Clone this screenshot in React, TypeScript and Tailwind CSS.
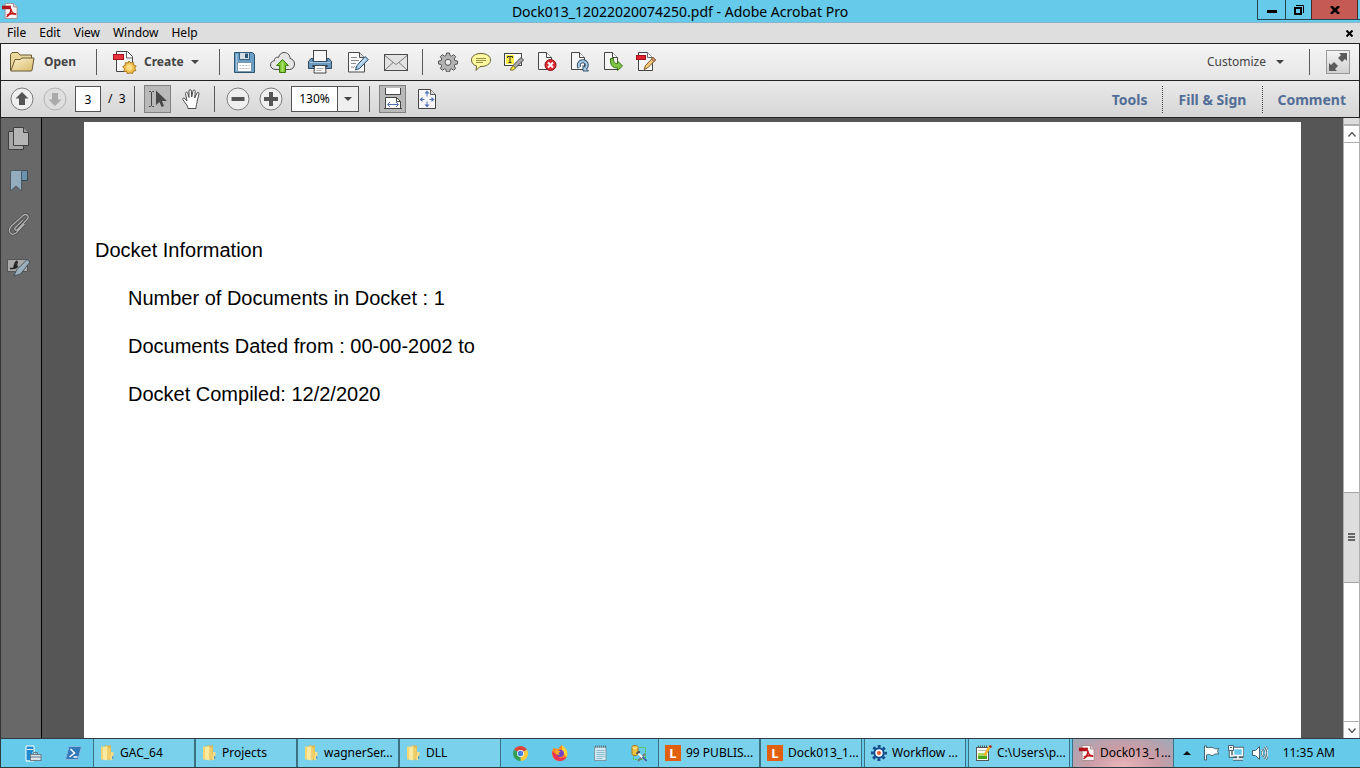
import { useState } from 'react'
import type { ReactNode } from 'react'

const menus = ['File', 'Edit', 'View', 'Window', 'Help']

function PdfIcon({ className = 'w-4 h-4' }: { className?: string }) {
  return (
    <svg viewBox="0 0 18 18" className={className}>
      <path d="M3.500.5H13l4 4v13H3.500z" fill="#fbf6f5" stroke="#a08a88" />
      <path d="M13 .5v4h4" fill="#d8cccb" stroke="#a08a88" />
      <path d="M0 3h10v4H0z" fill="#b2151b" />
      <path d="M9.500 6c1 4 3 6.500 6.500 6.500M10 7c.5 3-2 7-5 8.500M5.500 14c3-2.500 6-2.500 10-1.500" fill="none" stroke="#c4171e" strokeWidth="1.800" />
    </svg>
  )
}

function OpenIcon() {
  return (
    <svg viewBox="0 0 25 20" className="w-[25px] h-5">
      <defs>
        <linearGradient id="fold" x1="0" y1="0" x2="1" y2="1">
          <stop offset="0" stopColor="#fdf3cf" />
          <stop offset="1" stopColor="#d8b968" />
        </linearGradient>
      </defs>
      <path d="M.5 18V2.500L2 .5h6l2 2.500h11.500V7" fill="#e9d79c" stroke="#6b5a35" />
      <path d="M.8 19 5 7.500h5l2-1.500h12l-2 12.500-1 .5z" fill="url(#fold)" stroke="#6b5a35" />
    </svg>
  )
}

function CreateIcon() {
  return (
    <svg viewBox="0 0 24 23" className="w-6 h-[23px]">
      <path d="M3.500.5h11l5 5v15H3.500z" fill="#f8f8f8" stroke="#444" />
      <path d="M13.500 1v6h6" fill="#fff" stroke="#666" />
      <rect x=".5" y="3.500" width="10" height="5" fill="#e8323f" stroke="#a3141d" />
      <path d="m16 10 1.700 2 2.600-.7.300 2.700 2.600 1-1.500 2.200 1.200 2.400-2.700.6-.7 2.500-2.500-1-2.300 1.300-1.100-2.400-2.700-.3.600-2.600-1.800-2 2.400-1.400.3-2.700 2.600.4z" fill="#f0bf4c" stroke="#a87924" />
      <circle cx="16.300" cy="16.500" r="3" fill="#fbdc86" />
    </svg>
  )
}

function SaveIcon() {
  return (
    <svg viewBox="0 0 21 21" className="w-[21px] h-[21px]">
      <path d="M.5.5h18l2 2v18H.5z" fill="#6b9ec4" stroke="#2c5572" />
      <path d="M2 2h1.500v17H2z" fill="#9ac2de" />
      <rect x="5.500" y=".5" width="10" height="7" fill="#d4dde4" stroke="#3a6280" />
      <rect x="11" y="1.500" width="3" height="4.500" fill="#2c5572" />
      <rect x="3.500" y="10.500" width="14" height="9" fill="#fff" stroke="#7c98ad" />
      <path d="M5.500 13.500h10M5.500 16.500h10" stroke="#b5bcc2" strokeDasharray="2 1" />
    </svg>
  )
}

function CloudIcon() {
  return (
    <svg viewBox="0 0 25 21" className="w-[25px] h-[21px]">
      <path d="M6 17.500C2.500 17.500.5 15.500.5 13c0-2.500 1.500-4 4-4.300C4 6 7 4.500 8.500 5.500 9.500 2 11.500.5 14 .5c3.500 0 6 2.500 6 6 2.500.5 4.500 2.500 4.500 5.500s-2 5.500-5 5.500z" fill="#e6e6e6" stroke="#4c4c4c" />
      <path d="m12.500 7.500 6 6h-3v7h-6v-7h-3z" fill="#7cc62f" stroke="#3d7c10" />
      <path d="M12.500 9.500v10" stroke="#a9e36b" strokeWidth="2" />
    </svg>
  )
}

function PrintIcon() {
  return (
    <svg viewBox="0 0 24 24" className="w-6 h-6">
      <rect x="5.500" y=".5" width="13" height="11" fill="#f6f6f6" stroke="#444" />
      <path d="M3 8.500h2v3h14v-3h2l2.500 3v7h-23v-7z" fill="#6b99bd" stroke="#2e4c63" />
      <path d="M2 12.500h20" stroke="#a4c6df" />
      <path d="M4.500 15h15v2h-15z" fill="#20394d" />
      <path d="M6.500 15.500h11l.5 7.500H6z" fill="#fff" stroke="#444" />
      <path d="M8.500 18.500h7M8.500 20.500h5" stroke="#aaa" />
    </svg>
  )
}

function EditDocIcon() {
  return (
    <svg viewBox="0 0 22 21" className="w-[22px] h-[21px]">
      <path d="M1.500.5h11l5 5v14.500h-16z" fill="#fafafa" stroke="#4a4a4a" />
      <path d="M12.500.5v5h5" fill="#ddd" stroke="#4a4a4a" />
      <path d="M4 5.500h6M4 8.500h8M4 11.500h5M4 15.500c1-2 2 1 3-.5s1 1 2 .5" fill="none" stroke="#888" />
      <path d="M18 4.500 21.300 7.500l-8.800 9-4 1.500 1.500-4.500z" fill="#a9cbe4" stroke="#28516f" />
      <path d="m12 13.500 6.500-6.500" stroke="#e3f0f9" />
    </svg>
  )
}

function MailIcon() {
  return (
    <svg viewBox="0 0 24 17" className="w-6 h-[17px]">
      <rect x=".5" y=".5" width="23" height="16" fill="#e2e2e2" stroke="#4b4b4b" />
      <path d="m1 1.500 9.500 8c1 1 2 1 3 0l9.500-8M1 16l8-7.500M23 16l-8-7.500" fill="none" stroke="#777" />
    </svg>
  )
}

function GearIcon() {
  return (
    <svg viewBox="0 0 20 20" className="w-5 h-5">
      <path
        d="M8.500 1h3l.5 2.500 1.500.7 2.200-1.500 2 2-1.500 2.300.6 1.500 2.700.5v3l-2.700.5-.6 1.500 1.500 2.300-2 2-2.200-1.500-1.500.7-.5 2.500h-3L8 17.500l-1.500-.7-2.200 1.500-2-2L3.800 14l-.6-1.500L.5 12V9l2.700-.5L3.800 7 2.300 4.700l2-2 2.200 1.500L8 3.500z"
        fill="#b4b4b4"
        stroke="#555"
      />
      <circle cx="10" cy="10.300" r="3" fill="#ececec" stroke="#555" />
    </svg>
  )
}

function CommentIcon() {
  return (
    <svg viewBox="0 0 20 18" className="w-5 h-[18px]">
      <path d="M10 .5c5.500 0 9.500 2.500 9.500 6.500s-4 6.500-9.500 6.500H9L5 17.500l.5-4.500C2.500 12 .5 10 .5 7 .5 3 4.500.5 10 .5z" fill="#fff9a0" stroke="#66612f" />
      <path d="M5 5.500h10M5 7.500h10M5 9.500h7" stroke="#918a42" />
    </svg>
  )
}

function HighlightIcon() {
  return (
    <svg viewBox="0 0 20 18" className="w-5 h-[18px]">
      <rect x=".5" y=".5" width="17" height="12" fill="#fff" stroke="#444" />
      <rect x="2" y="2" width="8" height="9" fill="#ffec42" />
      <path d="M3.500 5V3.500h5V5M6 3.500v6M4.500 9.500h3" fill="none" stroke="#333" />
      <path d="m17 4.500 2.500 2.500-8 8H9v-2.500z" fill="#aaa" stroke="#444" />
      <path d="m9 12.500 2.500 2.500-2 2H6z" fill="#ffe42b" stroke="#777030" />
    </svg>
  )
}

// page sheet shared by the delete / rotate / extract buttons
function Sheet({ children }: { children: ReactNode }) {
  return (
    <svg viewBox="0 0 20 20" className="w-5 h-5">
      <path d="M1.500.5h8l5 5v12h-13z" fill="#f6f6f6" stroke="#464646" />
      <path d="M9.500.5v5h5" fill="#fff" stroke="#464646" />
      {children}
    </svg>
  )
}

function DeletePageIcon() {
  return (
    <Sheet>
      <circle cx="13.500" cy="13" r="5.500" fill="#dc2a30" stroke="#8b1116" />
      <path d="m11 10.500 5 5m0-5-5 5" stroke="#fff" strokeWidth="2" />
    </Sheet>
  )
}

function RotatePageIcon() {
  return (
    <Sheet>
      <path d="M9.500 15.500a4 4 0 1 1 5.500 1" fill="none" stroke="#35536d" strokeWidth="4" />
      <path d="M13 13.500v5.500h5.500z" fill="#a8cae5" stroke="#35536d" />
      <path d="M9.500 15.500a4 4 0 1 1 5.500 1" fill="none" stroke="#a8cae5" strokeWidth="2" />
    </Sheet>
  )
}

function ExtractPageIcon() {
  return (
    <Sheet>
      <path d="M7.500 6.500h3c0 4 1 5 4 5V9l5 5-5 4.500V16c-5 0-7.500-3-7-9.500z" fill="#7fc742" stroke="#356f14" />
    </Sheet>
  )
}

function EditPdfIcon() {
  return (
    <svg viewBox="0 0 20 20" className="w-5 h-5">
      <path d="M2.500.5h9l5 5v13h-14z" fill="#f8f8f8" stroke="#444" />
      <path d="M11.500.5v5h5" fill="#fff" stroke="#666" />
      <rect x=".5" y="3.500" width="9" height="4" fill="#e4202c" stroke="#9c131b" />
      <path d="m17 5.500 2.500 2.500-8 8-3.500 1.500 1.500-4z" fill="#f3c878" stroke="#7c5724" />
      <path d="m17 5.500 2.500 2.500-1.500 1.500L15.500 7z" fill="#e69a8c" stroke="#7c5724" />
    </svg>
  )
}

function CircleIcon({ faded, children }: { faded?: boolean; children: ReactNode }) {
  return (
    <svg viewBox="0 0 24 24" className="w-6 h-6">
      <circle cx="12" cy="12" r="11" fill={faded ? '#dedede' : '#efefef'} stroke={faded ? '#b4b4b4' : '#7b7b7b'} />
      <g fill={faded ? '#aaa' : '#555'}>{children}</g>
    </svg>
  )
}

function SelectIcon() {
  return (
    <svg viewBox="0 0 20 18" className="w-5 h-[18px]">
      <path d="M1 1.500h1.500l1 1 1-1H6M3.500 2v14M1 16.500h1.500l1-1 1 1H6" fill="none" stroke="#444" />
      <path d="M8 .5v14.500l3.500-3 2 5 2.500-1-2-5H19z" fill="#484848" />
    </svg>
  )
}

function HandIcon() {
  return (
    <svg viewBox="0 0 20 20" className="w-5 h-5">
      <path d="M6 19.500c0-2-1-3-2-4.500L.8 10.500c-.6-1.500 1-2 2-1L5 12 3.500 4.500c0-1.700 1.800-1.900 2.200-.3L7 8.500 7 2C7 .3 9.200.2 9.400 2l.3 6L11 2c.4-1.600 2.400-1.300 2.200.4L12.700 9l2.300-5c.8-1.400 2.500-.6 2 1l-1.800 7c-.4 3-1.200 4-1.200 7.500z" fill="#fff" stroke="#4d4d4d" />
    </svg>
  )
}

function FitWidthIcon() {
  return (
    <svg viewBox="0 0 18 22" className="w-[18px] h-[22px]">
      <path d="M1.500 0v6.500h15V0" fill="#fff" stroke="#444" />
      <path d="M1.500 20V9.500h11l4 4V20" fill="#fff" stroke="#444" />
      <path d="M12.500 9.500v4h4" fill="none" stroke="#444" />
      <path d="M0 20.500h18" stroke="#444" />
      <path d="M4 16.500h10M6 14 3.500 16.500 6 19M12 14l2.500 2.500L12 19" fill="none" stroke="#5270b4" />
    </svg>
  )
}

function FitPageIcon() {
  return (
    <svg viewBox="0 0 18 20" className="w-[18px] h-5">
      <path d="M.5.5h12l5 5v14H.5z" fill="#f6f6f6" stroke="#444" />
      <path d="M12.500.5v5h5" fill="#ddd" stroke="#555" />
      <path d="M9 3v4.500M9 12.500V17M2 10.500h4.500M11.500 10.500H16" stroke="#5270b4" />
      <path d="m9 1.500 2.500 3h-5zM9 18.500l2.500-3h-5zM1.500 10.500l3-2.500v5zM16.500 10.500l-3-2.500v5z" fill="#5270b4" />
    </svg>
  )
}

function FolderIcon() {
  return (
    <svg viewBox="0 0 15 16" className="w-[15px] h-4">
      <path d="M1 1.500h4.500v13H1z" fill="#f3d673" />
      <path d="M5 .5h6v14H5z" fill="#dcb74c" />
      <path d="M3 2.500 7.500 1v14.500L3 14.500z" fill="#fbe9a0" />
      <path d="m8 3 2.500-1v11L8 15.500z" fill="#f0cd66" />
      <path d="M11 7h2.500v7L10 15.500z" fill="#f7de8c" />
      <path d="M12 11h1.500v3H12z" fill="#4fa3d1" />
    </svg>
  )
}

function LIcon() {
  return (
    <span className="w-4 h-4 bg-[#e0600f] text-white flex items-center justify-center text-[13px] leading-4 font-bold">L</span>
  )
}

function WorkflowIcon() {
  return (
    <svg viewBox="0 0 16 16" className="w-4 h-4">
      <circle cx="8" cy="8" r="6.700" fill="none" stroke="#134a8b" strokeWidth="2.600" strokeDasharray="2.900 2.362" strokeDashoffset="1.450" />
      <circle cx="8" cy="8" r="4.700" fill="#fff" stroke="#134a8b" strokeWidth="2" />
      <circle cx="8" cy="8" r="2" fill="#e8582a" />
    </svg>
  )
}

function NotepadPlusIcon() {
  return (
    <svg viewBox="0 0 17 17" className="w-[17px] h-[17px]">
      <rect x="1.500" y="2.500" width="12" height="13" fill="#fdfdf6" stroke="#555" />
      <path d="M3 5.500h8" stroke="#bbb" />
      <path d="M3 8h9v3H3z" fill="#a8d860" />
      <path d="M3 11h9v3H3z" fill="#4fa41d" />
      <path d="M3 1.500h10" stroke="#555" strokeWidth="2" strokeDasharray="1 1" />
      <path d="m15 1-5.500 9.500" stroke="#f0b52f" strokeWidth="2.500" />
      <path d="m16 .5-1 2" stroke="#a0281f" strokeWidth="2.500" />
    </svg>
  )
}

function ServerManagerIcon() {
  return (
    <svg viewBox="0 0 17 17" className="w-[17px] h-[17px]">
      <path d="M1 1h8v6H7v2H5v6H1z" fill="#2189d1" />
      <path d="M1 1h8v15H1z" fill="none" stroke="#fff" />
      <path d="M2 4.500h6" stroke="#fff" />
      <path d="M8.500 9V7.500h4V9" fill="none" stroke="#6d7c88" />
      <rect x="5.500" y="9.500" width="10.500" height="6" fill="#dce4ea" stroke="#6d7c88" />
      <path d="M5 12h11" stroke="#6d7c88" />
    </svg>
  )
}

function PowerShellIcon() {
  return (
    <svg viewBox="0 0 17 14" className="w-[17px] h-[14px]">
      <path d="M4 .5h12.500l-3.500 13H.5z" fill="#3179b9" stroke="#86b9de" />
      <path d="m5.500 3 4 4-5 4M8.500 11h4" fill="none" stroke="#fff" strokeWidth="1.500" />
    </svg>
  )
}

function ChromeIcon() {
  return (
    <svg viewBox="0 0 16 16" className="w-[15px] h-[15px]">
      <path d="M8 8 1.100 4A8 8 0 0 1 14.900 4z" fill="#dc4436" />
      <path d="M8 8 14.900 4A8 8 0 0 1 8 16z" fill="#f8ca3c" />
      <path d="M8 8v8A8 8 0 0 1 1.100 4z" fill="#379e56" />
      <circle cx="8" cy="8" r="3.700" fill="#fff" />
      <circle cx="8" cy="8" r="2.900" fill="#447fdf" />
    </svg>
  )
}

function FirefoxIcon() {
  return (
    <svg viewBox="0 0 16 16" className="w-4 h-4">
      <path d="M10 0c1 2 3 2 4.500 5 3 6-1.500 11-6.500 11S0 12.500 0 8c0-2 .8-4 2-5.500L3 4c2-1 3 0 4 0 0-2 1.500-3 3-4z" fill="#ff8a1f" />
      <path d="M10 0c1 2 3 2 4.500 5 1 2.500 1 5 0 7L10 6z" fill="#ffd43a" />
      <path d="M.4 6C0 12 3 16 8 16c3 0 5-1.500 6.500-4L8 13z" fill="#ef3355" />
      <circle cx="8.300" cy="8.300" r="3.600" fill="#7141c8" />
      <path d="M3 6c2-1 3.500-1 5.500.5L6.500 8 8 10c-3 0-4.500-1-5-4z" fill="#ffad22" />
    </svg>
  )
}

function NotepadIcon() {
  return (
    <svg viewBox="0 0 14 16" className="w-[14px] h-4">
      <rect x="1.500" y="2" width="11.500" height="13.500" fill="#d4eaf2" stroke="#7a98a5" />
      <path d="M2 1.500h11" stroke="#5c7480" strokeWidth="2" strokeDasharray="1 1" />
      <path d="M3.500 5.500h8M3.500 7.500h8M3.500 9.500h8M3.500 11.500h8M3.500 13.500h6" stroke="#8bbccd" />
    </svg>
  )
}

function DbToolIcon() {
  return (
    <svg viewBox="0 0 17 17" className="w-[17px] h-[17px]">
      <rect x="2.500" y="2.500" width="12" height="12" fill="none" stroke="#59c238" strokeDasharray="2 1" />
      <path d="M1 2c0-2 6-2 6 0v7c0 2-6 2-6 0z" fill="#efc241" stroke="#a57b1c" />
      <path d="M1.500 2.500c1 1 4 1 5 0" fill="none" stroke="#fff2b8" />
      <path d="m7 16 7-7" stroke="#777" strokeWidth="2" />
      <path d="m7 8 8 8" stroke="#f3f3f3" strokeWidth="2" />
      <path d="m11.500 12 4 4" stroke="#3865a5" strokeWidth="2" />
      <path d="M6 9c0-2 1.500-2 3-2" fill="none" stroke="#555" strokeWidth="2" />
    </svg>
  )
}

function Caret() {
  return (
    <svg viewBox="0 0 8 4" className="w-2 h-1">
      <path d="M0 0h8L4 4z" fill="#444" />
    </svg>
  )
}

function Sep() {
  return <span className="w-px h-[26px] bg-[#5a5a5a] shrink-0" />
}

function ToolButton({ label, className, children }: { label: string; className: string; children: ReactNode }) {
  return (
    <button type="button" aria-label={label} className={`h-7 flex items-center justify-center shrink-0 ${className}`}>
      {children}
    </button>
  )
}

const fileTools = [
  { label: 'Save', icon: <SaveIcon /> },
  { label: 'Upload', icon: <CloudIcon /> },
  { label: 'Print', icon: <PrintIcon /> },
  { label: 'Edit text', icon: <EditDocIcon /> },
  { label: 'Email', icon: <MailIcon /> },
]

const quickTools = [
  { label: 'Preferences', icon: <GearIcon /> },
  { label: 'Add note', icon: <CommentIcon /> },
  { label: 'Highlight', icon: <HighlightIcon /> },
  { label: 'Delete page', icon: <DeletePageIcon /> },
  { label: 'Rotate page', icon: <RotatePageIcon /> },
  { label: 'Extract page', icon: <ExtractPageIcon /> },
  { label: 'Edit PDF', icon: <EditPdfIcon /> },
]

const folders = ['GAC_64', 'Projects', 'wagnerSer...', 'DLL']

function TitleBar() {
  return (
    <header className="h-[23px] shrink-0 flex items-start bg-[#66caea] border-b border-[#8ab4c6]">
      <div className="w-[103px] pl-[2px] pt-[3px]">
        <PdfIcon />
      </div>
      <h1 className="flex-1 text-center text-[14px] leading-[23px] whitespace-nowrap text-black">
        Dock013_12022020074250.pdf - Adobe Acrobat Pro
      </h1>
      <div className="flex h-5 w-[103px] border-l border-b border-[#26434f]">
        <button type="button" aria-label="Minimize" className="w-[27px] flex items-center justify-center">
          <span className="w-[10px] h-[3px] mt-1 bg-black" />
        </button>
        <button type="button" aria-label="Restore" className="w-[26px] border-l border-[#26434f] flex items-center justify-center">
          <svg viewBox="0 0 10 10" className="w-[10px] h-[10px]">
            <path d="M1 3h6v6H1z" fill="none" stroke="#000" strokeWidth="2" />
            <path d="M2 .5h7.500V8" fill="none" stroke="#000" />
          </svg>
        </button>
        <button type="button" aria-label="Close" className="flex-1 mr-[2px] bg-[#c45a53] border-x border-[#4a2724] flex items-center justify-center">
          <svg viewBox="0 0 10 8" className="w-[10px] h-2">
            <path d="m1 0 8 8M9 0 1 8" stroke="#000" strokeWidth="2.500" />
          </svg>
        </button>
      </div>
    </header>
  )
}

function MenuBar() {
  return (
    <nav className="h-5 shrink-0 flex items-center gap-[13px] px-[7px] bg-[#dedede] text-[12px] leading-4">
      {menus.map((m) => (
        <button key={m} type="button">{m}</button>
      ))}
      <button type="button" aria-label="Close document" className="ml-auto">
        <svg viewBox="0 0 7 7" className="w-[7px] h-[7px]">
          <path d="m.5.5 6 6m0-6-6 6" stroke="#000" strokeWidth="2" />
        </svg>
      </button>
    </nav>
  )
}

function MainToolbar() {
  return (
    <div className="h-[37px] shrink-0 flex items-center border-t border-x border-[#222] bg-linear-to-b from-[#f5f5f5] to-[#e5e5e5] text-[#444]">
      <button type="button" className="w-[95px] pl-[9px] flex items-center gap-[9px] font-bold text-[12px]">
        <OpenIcon />
        Open
      </button>
      <Sep />
      <button type="button" className="w-[122px] pl-4 flex items-center gap-[7px] font-bold text-[12px]">
        <CreateIcon />
        Create
        <Caret />
      </button>
      <Sep />
      <div className="flex pl-[5px] w-[202px]">
        {fileTools.map((t) => (
          <ToolButton key={t.label} label={t.label} className="w-[38px]">{t.icon}</ToolButton>
        ))}
      </div>
      <Sep />
      <div className="flex pl-2">
        {quickTools.map((t) => (
          <ToolButton key={t.label} label={t.label} className="w-[33px]">{t.icon}</ToolButton>
        ))}
      </div>
      <button type="button" className="ml-auto mr-[25px] flex items-center gap-[10px] text-[12px]">
        Customize
        <Caret />
      </button>
      <Sep />
      <button type="button" aria-label="Read mode" className="ml-4 mr-[9px] w-6 h-6 border border-[#999] bg-linear-to-b from-[#f4f4f4] to-[#d0d0d0] flex items-center justify-center">
        <svg viewBox="0 0 18 18" className="w-[18px] h-[18px]">
          <path d="M18 0v8l-2-2-3 3-4-4 3-3-2-2zM0 18v-8l2 2 3-3 4 4-3 3 2 2z" fill="#5c5c5c" />
        </svg>
      </button>
    </div>
  )
}

function PageToolbar() {
  const [page, setPage] = useState('3')
  const [zoom, setZoom] = useState('130%')

  return (
    <div className="h-[37px] shrink-0 flex items-center border-t border-x border-[#222] bg-linear-to-b from-[#e9e9e9] to-[#d6d6d6] text-[12px]">
      <ToolButton label="Previous page" className="w-[33px] ml-1">
        <CircleIcon><path d="m12 5 6.500 6.500H15V18H9v-6.500H5.500z" /></CircleIcon>
      </ToolButton>
      <ToolButton label="Next page" className="w-[33px]">
        <CircleIcon faded><path d="m12 19 6.500-6.500H15V6H9v6.500H5.500z" /></CircleIcon>
      </ToolButton>
      <input
        aria-label="Page number"
        value={page}
        onChange={(e) => setPage(e.target.value)}
        className="ml-1 w-[26px] h-[26px] bg-white border border-[#555] text-center text-black"
      />
      <span className="w-[33px] pl-[7px] whitespace-pre text-black">/  3</span>
      <Sep />
      <ToolButton label="Select" className="w-[27px] ml-[9px] bg-[#b9b9b9] border border-[#808080]"><SelectIcon /></ToolButton>
      <ToolButton label="Hand" className="w-[33px] ml-1 mr-[6px]"><HandIcon /></ToolButton>
      <Sep />
      <ToolButton label="Zoom out" className="w-[33px] ml-[6px]">
        <CircleIcon><path d="M5.500 10h13v4h-13z" /></CircleIcon>
      </ToolButton>
      <ToolButton label="Zoom in" className="w-[33px]">
        <CircleIcon><path d="M10 5h4v5h5v4h-5v5h-4v-5H5v-4h5z" /></CircleIcon>
      </ToolButton>
      <div className="ml-1 mr-[10px] w-[68px] h-[26px] flex border border-[#555] bg-white">
        <input
          aria-label="Zoom"
          value={zoom}
          onChange={(e) => setZoom(e.target.value)}
          className="w-[45px] text-center text-black"
        />
        <button type="button" aria-label="Zoom levels" className="flex-1 border-l border-[#555] bg-[#efefef] flex items-center justify-center">
          <Caret />
        </button>
      </div>
      <Sep />
      <ToolButton label="Fit width" className="w-[27px] ml-[9px] bg-[#b9b9b9] border border-[#808080]"><FitWidthIcon /></ToolButton>
      <ToolButton label="Fit page" className="w-[33px] ml-1"><FitPageIcon /></ToolButton>
      <div className="ml-auto mr-[13px] flex items-center text-[14px] font-bold text-[#526d96]">
        <button type="button" className="pr-[14px]">Tools</button>
        <button type="button" className="h-[27px] px-4 border-l border-dotted border-[#444]">Fill &amp; Sign</button>
        <button type="button" className="h-[27px] pl-[14px] border-l border-dotted border-[#444]">Comment</button>
      </div>
    </div>
  )
}

function SidePanel() {
  return (
    <aside className="w-[42px] shrink-0 pt-[6px] flex flex-col gap-[15px] bg-[#686868] border-l border-l-[#333] border-r border-r-black">
      <ToolButton label="Page thumbnails" className="w-9">
        <svg viewBox="0 0 22 23" className="w-[22px] h-[23px]">
          <path d="M.5 4.500h15v18H.5z" fill="#a6a6a6" stroke="#3f3f3f" />
          <path d="M5.500.5h10l5 5v13h-15z" fill="#b5b5b5" stroke="#3f3f3f" />
          <path d="M15.500.5v5h5" fill="#999" stroke="#3f3f3f" />
        </svg>
      </ToolButton>
      <ToolButton label="Bookmarks" className="w-9">
        <svg viewBox="0 0 18 22" className="w-[18px] h-[22px]">
          <path d="M11.500.5h6v10h-6z" fill="#6b93ad" stroke="#3b4a55" />
          <path d="M.5 1.500 2 .5h11L11.500 2v19L6 16 .5 21z" fill="#93adbe" stroke="#4b5a65" />
        </svg>
      </ToolButton>
      <ToolButton label="Attachments" className="w-9">
        <svg viewBox="0 0 22 23" className="w-[22px] h-[23px]">
          <path d="m15 7-8 8c-1 1.500 1 3 2.500 1.500l9.500-10c3-3.500-1-6.500-4-4L3 13.500C-1 18 3.500 24 8 20l8.500-9" fill="none" stroke="#444" strokeWidth="2.600" />
          <path d="m15 7-8 8c-1 1.500 1 3 2.500 1.500l9.500-10c3-3.500-1-6.500-4-4L3 13.500C-1 18 3.500 24 8 20l8.500-9" fill="none" stroke="#b0b0b0" strokeWidth="1.300" />
        </svg>
      </ToolButton>
      <ToolButton label="Signatures" className="w-9">
        <svg viewBox="0 0 24 20" className="w-6 h-5">
          <path d="M.5 2.500h20v12H.5z" fill="#a9a9a9" stroke="#555" />
          <path d="M3 11.500h3c3-2 5-6 4-7s-3 4-3 6 3-1 4-1.500" fill="none" stroke="#222" strokeWidth="1.500" />
          <path d="m20 2.500 3 2.500-9.500 12L7 19l2.500-6z" fill="#9bb0bf" stroke="#46545e" />
        </svg>
      </ToolButton>
    </aside>
  )
}

function ScrollBar() {
  return (
    <div className="w-[17px] shrink-0 flex flex-col bg-white border-x border-[#b0b0b0]">
      <div className="h-2 bg-[#ddd] border-b-2 border-[#b0b0b0]" />
      <button type="button" aria-label="Scroll up" className="h-[17px] border-b border-[#b0b0b0] flex items-center justify-center">
        <svg viewBox="0 0 8 5" className="w-2 h-[5px]">
          <path d="m.5 4.500 3.500-4 3.500 4" fill="none" stroke="#555" strokeWidth="1.300" />
        </svg>
      </button>
      <div className="flex-[351]" />
      <div className="flex-[89] bg-[#ddd] border-y border-[#a5a5a5] flex flex-col gap-px items-center justify-center">
        <span className="w-[7px] h-[2px] bg-[#666]" />
        <span className="w-[7px] h-[2px] bg-[#666]" />
        <span className="w-[7px] h-[2px] bg-[#666]" />
      </div>
      <div className="flex-[139]" />
      <button type="button" aria-label="Scroll down" className="h-[17px] border-t border-[#b0b0b0] flex items-center justify-center">
        <svg viewBox="0 0 8 5" className="w-2 h-[5px]">
          <path d="m.5.5 3.500 4 3.500-4" fill="none" stroke="#555" strokeWidth="1.300" />
        </svg>
      </button>
    </div>
  )
}

function DocumentPage() {
  return (
    <main className="flex-1 min-w-0 px-[42px] pt-1 bg-[#565656] flex">
      <article className="flex-1 bg-white pt-[116px] pl-[11px] text-[20px] leading-6 text-black font-['Liberation_Sans',Arial,sans-serif]">
        <h2>Docket Information</h2>
        <div className="mt-6 pl-[33px] flex flex-col gap-6">
          <p>Number of Documents in Docket : 1</p>
          <p>Documents Dated from : 00-00-2002 to</p>
          <p>Docket Compiled: 12/2/2020</p>
        </div>
      </article>
    </main>
  )
}

function TaskButton({ icon, label, className = 'bg-[#7ad1ec]' }: { icon: ReactNode; label: string; className?: string }) {
  return (
    <button
      type="button"
      className={`w-[102px] h-full shrink-0 pl-[6px] flex items-center gap-[5px] border-x border-[#3c7184] whitespace-nowrap ${className}`}
    >
      {icon}
      {label}
    </button>
  )
}

function TaskBar() {
  return (
    <footer className="h-[30px] shrink-0 flex items-center bg-[#66caea] border-y border-l border-[#2f3b40] text-[12px] text-black">
      <ToolButton label="Server Manager" className="w-[39px] ml-[13px]"><ServerManagerIcon /></ToolButton>
      <ToolButton label="PowerShell" className="w-10"><PowerShellIcon /></ToolButton>
      <div className="flex h-full">
        {folders.map((f) => (
          <TaskButton key={f} label={f} icon={<FolderIcon />} />
        ))}
      </div>
      <div className="flex flex-none">
        <ToolButton label="Chrome" className="w-[39px]"><ChromeIcon /></ToolButton>
        <ToolButton label="Firefox" className="w-10"><FirefoxIcon /></ToolButton>
        <ToolButton label="Notepad" className="w-10"><NotepadIcon /></ToolButton>
        <ToolButton label="Database tool" className="w-[38px]"><DbToolIcon /></ToolButton>
      </div>
      <div className="flex h-full">
        <TaskButton icon={<LIcon />} label="99 PUBLIS..." />
        <TaskButton icon={<LIcon />} label="Dock013_1..." />
      </div>
      <div className="flex h-full gap-[2px] pl-[2px]">
        <TaskButton icon={<WorkflowIcon />} label="Workflow ..." />
        <TaskButton icon={<NotepadPlusIcon />} label="C:\Users\p..." />
        <TaskButton
          icon={<PdfIcon />}
          label="Dock013_1..."
          className="bg-radial-[at_50%_100%] from-[#eab6ba] via-[#c99ca6] to-[#9fa9b8]"
        />
      </div>
      <div className="ml-auto flex items-center pr-[25px]">
        <button type="button" aria-label="Show hidden icons" className="mr-3">
          <svg viewBox="0 0 8 4" className="w-2 h-1"><path d="M4 0 0 4h8z" fill="#111" /></svg>
        </button>
        <svg viewBox="0 0 17 16" className="w-[17px] h-4 mr-2">
          <path d="M1.500 1v14h2v-5c3-2 5 2 7 0 1.500-1.500 3-1 5.500-1-2-2-1.500-4 0-5.500-3 .5-4 .5-5.500-.5-2-1.500-4 0-7-.5V1z" fill="#fff" stroke="#47636e" />
        </svg>
        <svg viewBox="0 0 16 16" className="w-4 h-4 mr-2">
          <path d="M5.500 3.500h9v7h-9zM10 11v3M5 14h10M2.500 5v6h3" fill="none" stroke="#47636e" strokeWidth="3.500" />
          <path d="M5.500 3.500h9v7h-9z" fill="#66caea" />
          <path d="M5.500 3.500h9v7h-9zM10 11v3M5 14h10M2.500 5v6h3" fill="none" stroke="#fff" strokeWidth="1.500" />
          <path d="M.5.500h5v5h-5z" fill="#fff" stroke="#47636e" />
          <path d="M2 2.500h2" stroke="#47636e" />
        </svg>
        <svg viewBox="0 0 16 16" className="w-4 h-4 mr-[15px]">
          <path d="M9.500 5c1.500 1.500 1.500 4.500 0 6M11.500 3c3 3 3 7 0 10M13.500 1.500c3 4 3 9 0 13" fill="none" stroke="#47636e" strokeWidth="2" />
          <path d="M.5 5.500h3l4-4v13l-4-4h-3z" fill="#fff" stroke="#47636e" />
          <path d="M9.500 5c1.500 1.500 1.500 4.500 0 6M11.500 3c3 3 3 7 0 10M13.500 1.500c3 4 3 9 0 13" fill="none" stroke="#fff" />
        </svg>
        <time>11:35 AM</time>
      </div>
    </footer>
  )
}

export default function App() {
  return (
    <div className="h-screen flex flex-col overflow-hidden bg-[#565656] text-black font-['Noto_Sans','Open_Sans',sans-serif]">
      <TitleBar />
      <MenuBar />
      <MainToolbar />
      <PageToolbar />
      <div className="flex-1 min-h-0 flex border-t border-[#222]">
        <SidePanel />
        <DocumentPage />
        <ScrollBar />
      </div>
      <TaskBar />
    </div>
  )
}
